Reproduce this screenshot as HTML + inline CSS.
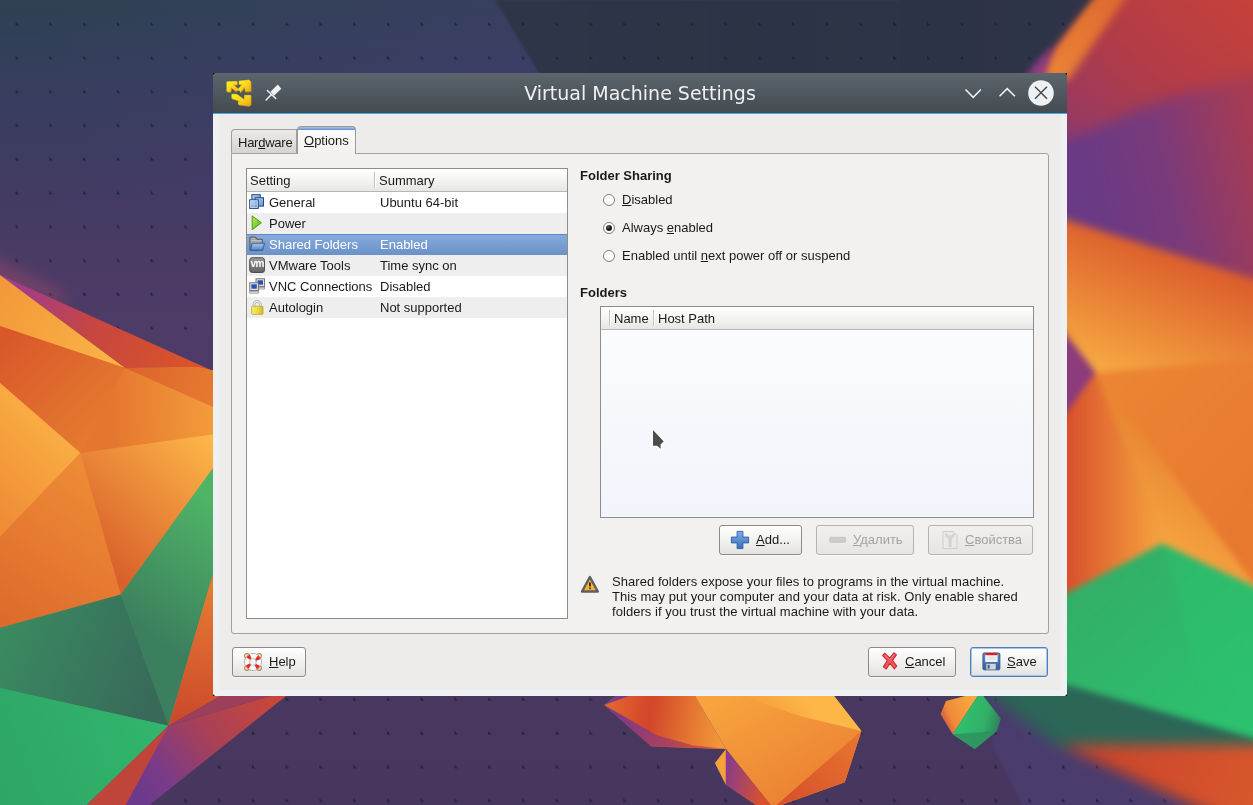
<!DOCTYPE html>
<html><head><meta charset="utf-8"><title>Virtual Machine Settings</title>
<style>
html,body{margin:0;padding:0;}
body{width:1253px;height:805px;overflow:hidden;position:relative;background:#2b3245;font-family:"Liberation Sans",sans-serif;font-size:13px;color:#1a1a1a;}
#wall{position:absolute;left:0;top:0;width:1253px;height:805px;}
#win{opacity:.999;position:absolute;left:213px;top:73px;width:854px;height:623px;background:#eff0f1;}
#tbar{position:absolute;left:0;top:0;width:854px;height:40px;background:linear-gradient(#5b656c,#434b51);border-bottom:1px solid #3daee9;}
#title{position:absolute;left:0;top:0;width:854px;height:40px;line-height:40px;text-align:center;color:#eff0f1;font-family:"DejaVu Sans",sans-serif;font-size:19px;}
.abs{position:absolute;}
u{text-decoration:underline;text-underline-offset:1px;}
.t{position:absolute;white-space:nowrap;line-height:15px;height:15px;}
.b{font-weight:bold;}
/* tabs */
#tab1{position:absolute;left:18px;top:56px;width:66px;height:24px;box-sizing:border-box;border:1px solid #a09e9b;border-bottom:none;border-radius:4px 0 0 0;background:linear-gradient(#eceae8,#d6d4d1);}
#tab2{position:absolute;left:84px;top:53px;width:59px;height:28px;box-sizing:border-box;border:1px solid #9d9b98;border-bottom:none;border-radius:4px 4px 0 0;background:linear-gradient(#fbfbfa,#f2f1f0);overflow:hidden;}
#tab2 i{position:absolute;left:-1px;top:-1px;width:59px;height:4px;box-sizing:border-box;border:1px solid #4b7bb9;border-bottom-color:#6a96cf;border-radius:4px 4px 0 0;background:linear-gradient(#a3c2e8,#7fa6d8);}
#pane{position:absolute;left:18px;top:80px;width:818px;height:481px;box-sizing:border-box;border:1px solid #a3a19e;border-radius:0 3px 3px 3px;background:#f2f1f0;}
/* list */
.list{position:absolute;box-sizing:border-box;border:1px solid #8f8d8a;background:#fff;overflow:hidden;}
.hdr{position:absolute;left:0;top:0;right:0;height:22px;background:linear-gradient(#ffffff,#f4f4f3 50%,#e6e6e5);border-bottom:1px solid #b8b6b3;}
.sep{position:absolute;top:3px;width:1px;height:16px;background:#c4c2bf;border-right:1px solid #fff;}
.row{position:absolute;left:0;width:320px;height:21px;}
.row.alt{background:#eeeeee;}
.row.sel{background:linear-gradient(#86aadb,#6a92c8);color:#fff;border-top:1px solid #5e89c4;box-sizing:border-box;}
.row .n{position:absolute;left:22px;top:3px;line-height:15px;white-space:nowrap;}
.row .s{position:absolute;left:133px;top:3px;line-height:15px;white-space:nowrap;}
.row.sel .n,.row.sel .s{top:2px;}
.row.sel svg{top:1px;}
.row svg{position:absolute;left:2px;top:2px;width:16px;height:16px;}
/* radio */
.radio{position:absolute;width:12.6px;height:12.6px;box-sizing:border-box;border:1px solid #857f7b;border-radius:50%;background:radial-gradient(circle at 50% 40%,#fff 50%,#e9e9e9);}
.radio.on:after{content:"";position:absolute;left:2.1px;top:2.1px;width:6.4px;height:6.4px;border-radius:50%;background:radial-gradient(circle at 35% 30%,#666 0,#1a1a1a 45%);}
/* buttons */
.btn{position:absolute;box-sizing:border-box;height:30px;border:1px solid #8d8b88;border-radius:3px;background:linear-gradient(#ffffff,#f3f3f2 45%,#e3e2e0);box-shadow:0 1px 0 rgba(255,255,255,.6);}
.btn.dis{border-color:#b5b3b0;background:linear-gradient(#f1f0ef,#e6e5e3);color:#a5a3a0;}
.btn.def{border-color:#4f7fbd;box-shadow:inset 0 0 0 1px #a8c4e8;}
.btn .l{position:absolute;top:6px;line-height:15px;white-space:nowrap;}
.btn svg{position:absolute;}
.w{letter-spacing:.05px;}
#body{position:absolute;left:6px;top:41px;width:842px;height:576px;background:#edeceb;}
.cnr{position:absolute;width:0;height:0;border-style:solid;}

</style></head><body>
<svg id="wall" viewBox="0 0 1253 805">
<defs>
<linearGradient id="bg" gradientUnits="userSpaceOnUse" x1="0" y1="0" x2="0" y2="805">
<stop offset="0" stop-color="#2f4152"/><stop offset="0.062" stop-color="#333f59"/><stop offset="0.124" stop-color="#383e5e"/><stop offset="0.186" stop-color="#3d3c61"/><stop offset="0.248" stop-color="#433b63"/><stop offset="0.31" stop-color="#493b65"/><stop offset="0.4" stop-color="#4e3b67"/><stop offset="0.5" stop-color="#4e3a66"/><stop offset="0.75" stop-color="#4b3962"/><stop offset="1" stop-color="#47365d"/>
</linearGradient>
<linearGradient id="dk" gradientUnits="userSpaceOnUse" x1="500" y1="0" x2="1100" y2="0"><stop offset="0" stop-color="#2d3648"/><stop offset="0.4" stop-color="#2b3345"/><stop offset="1" stop-color="#2f3449"/></linearGradient>
<linearGradient id="fac" gradientUnits="userSpaceOnUse" x1="40" y1="0" x2="480" y2="0"><stop offset="0" stop-color="#563c8c" stop-opacity="0"/><stop offset="1" stop-color="#563c8c" stop-opacity=".2"/></linearGradient>
<pattern id="dots" width="33.76" height="33.76" patternUnits="userSpaceOnUse" x="15.6" y="22">
<path d="M0 0L3.4 3.4L0 3.4z" fill="#17202a" fill-opacity=".85"/>
</pattern>
<filter color-interpolation-filters="sRGB" id="bl4" filterUnits="userSpaceOnUse" x="900" y="-60" width="460" height="940"><feGaussianBlur stdDeviation="3"/></filter>
<filter color-interpolation-filters="sRGB" id="bl8" filterUnits="userSpaceOnUse" x="900" y="-60" width="460" height="940"><feGaussianBlur stdDeviation="7"/></filter>
<filter color-interpolation-filters="sRGB" id="bl5" filterUnits="userSpaceOnUse" x="900" y="-60" width="460" height="940"><feGaussianBlur stdDeviation="4.5"/></filter>
<filter color-interpolation-filters="sRGB" id="blg" filterUnits="userSpaceOnUse" x="-40" y="200" width="300" height="220"><feGaussianBlur stdDeviation="7"/></filter>
<filter color-interpolation-filters="sRGB" id="bl2" x="-20%" y="-20%" width="140%" height="140%"><feGaussianBlur stdDeviation="1.5"/></filter>
<!-- left group gradients -->
<linearGradient id="lo1" gradientUnits="userSpaceOnUse" x1="0" y1="300" x2="125" y2="368"><stop offset="0" stop-color="#f29a3a"/><stop offset="1" stop-color="#fbb547"/></linearGradient>
<linearGradient id="lr1" gradientUnits="userSpaceOnUse" x1="20" y1="285" x2="190" y2="368"><stop offset="0" stop-color="#a23c8c"/><stop offset="0.45" stop-color="#c7463f"/><stop offset="1" stop-color="#d9542a"/></linearGradient>
<linearGradient id="ld1" gradientUnits="userSpaceOnUse" x1="0" y1="340" x2="100" y2="440"><stop offset="0" stop-color="#d9572a"/><stop offset="1" stop-color="#e57c30"/></linearGradient>
<linearGradient id="lo2" gradientUnits="userSpaceOnUse" x1="0" y1="520" x2="80" y2="440"><stop offset="0" stop-color="#ef8c36"/><stop offset="1" stop-color="#fbb045"/></linearGradient>
<linearGradient id="lo3b" gradientUnits="userSpaceOnUse" x1="130" y1="368" x2="225" y2="400"><stop offset="0" stop-color="#de642c"/><stop offset="1" stop-color="#e77d30"/></linearGradient>
<linearGradient id="lo3" gradientUnits="userSpaceOnUse" x1="110" y1="430" x2="215" y2="425"><stop offset="0" stop-color="#e4762f"/><stop offset="1" stop-color="#f39c3b"/></linearGradient>
<linearGradient id="lo4" gradientUnits="userSpaceOnUse" x1="100" y1="560" x2="213" y2="440"><stop offset="0" stop-color="#d9602b"/><stop offset="1" stop-color="#fdb748"/></linearGradient>
<linearGradient id="lo5" gradientUnits="userSpaceOnUse" x1="0" y1="620" x2="100" y2="470"><stop offset="0" stop-color="#dd6a2c"/><stop offset="1" stop-color="#ee8c36"/></linearGradient>
<linearGradient id="lg1" gradientUnits="userSpaceOnUse" x1="130" y1="620" x2="213" y2="500"><stop offset="0" stop-color="#3c7f5e"/><stop offset="1" stop-color="#4fb566"/></linearGradient>
<linearGradient id="lg2" gradientUnits="userSpaceOnUse" x1="0" y1="640" x2="150" y2="700"><stop offset="0" stop-color="#3a8a60"/><stop offset="1" stop-color="#386a5a"/></linearGradient>
<linearGradient id="lg3" gradientUnits="userSpaceOnUse" x1="0" y1="780" x2="160" y2="720"><stop offset="0" stop-color="#2ea666"/><stop offset="1" stop-color="#31b56c"/></linearGradient>
<linearGradient id="lr2" gradientUnits="userSpaceOnUse" x1="205" y1="590" x2="190" y2="720"><stop offset="0" stop-color="#e57a32"/><stop offset="1" stop-color="#cc4a2b"/></linearGradient>
<linearGradient id="lp1" gradientUnits="userSpaceOnUse" x1="275" y1="700" x2="140" y2="800"><stop offset="0" stop-color="#c8473a"/><stop offset="0.45" stop-color="#a84058"/><stop offset="0.8" stop-color="#7a3b88"/><stop offset="1" stop-color="#6a3a8c"/></linearGradient>
<!-- right group -->
<linearGradient id="rr1" gradientUnits="userSpaceOnUse" x1="1253" y1="0" x2="1080" y2="190"><stop offset="0" stop-color="#c6423a"/><stop offset="0.5" stop-color="#b03b48"/><stop offset="0.8" stop-color="#9a3a60"/><stop offset="1" stop-color="#7a3a78"/></linearGradient>
<linearGradient id="rst" gradientUnits="userSpaceOnUse" x1="1117" y1="0" x2="1052" y2="80"><stop offset="0" stop-color="#df6a30"/><stop offset="1" stop-color="#ea8436"/></linearGradient>
<linearGradient id="rp1" gradientUnits="userSpaceOnUse" x1="1090" y1="190" x2="1260" y2="150"><stop offset="0" stop-color="#693a85"/><stop offset="0.45" stop-color="#7a3a7a"/><stop offset="1" stop-color="#a83b52"/></linearGradient>
<linearGradient id="ro1" gradientUnits="userSpaceOnUse" x1="1160" y1="250" x2="1110" y2="375"><stop offset="0" stop-color="#dc5f2c"/><stop offset="1" stop-color="#f7a942"/></linearGradient>
<linearGradient id="ro2" gradientUnits="userSpaceOnUse" x1="1100" y1="375" x2="1253" y2="520"><stop offset="0" stop-color="#ec8534"/><stop offset="1" stop-color="#e7792f"/></linearGradient>
<linearGradient id="ro4" gradientUnits="userSpaceOnUse" x1="1200" y1="470" x2="1150" y2="540"><stop offset="0" stop-color="#ea8633"/><stop offset="1" stop-color="#f5a640"/></linearGradient>
<linearGradient id="ro3" gradientUnits="userSpaceOnUse" x1="1067" y1="500" x2="1160" y2="500"><stop offset="0" stop-color="#d9502b"/><stop offset="1" stop-color="#f6a33e"/></linearGradient>
<linearGradient id="rg1" gradientUnits="userSpaceOnUse" x1="1090" y1="560" x2="1230" y2="720"><stop offset="0" stop-color="#33ad66"/><stop offset="1" stop-color="#2cc16f"/></linearGradient>
<linearGradient id="rrd" gradientUnits="userSpaceOnUse" x1="1080" y1="744" x2="1253" y2="790"><stop offset="0" stop-color="#c9432c"/><stop offset="1" stop-color="#d8562c"/></linearGradient>
<!-- bottom polyhedron -->
<linearGradient id="bo1" gradientUnits="userSpaceOnUse" x1="610" y1="715" x2="722" y2="730"><stop offset="0" stop-color="#e2642e"/><stop offset="0.35" stop-color="#d2452a"/><stop offset="0.75" stop-color="#e67a32"/><stop offset="1" stop-color="#f3973a"/></linearGradient>
<linearGradient id="bo2" gradientUnits="userSpaceOnUse" x1="760" y1="720" x2="800" y2="692"><stop offset="0" stop-color="#fdb747" stop-opacity="0"/><stop offset="1" stop-color="#fdb747" stop-opacity="1"/></linearGradient>
<linearGradient id="bo3" gradientUnits="userSpaceOnUse" x1="740" y1="692" x2="800" y2="805"><stop offset="0" stop-color="#f7a33e"/><stop offset="1" stop-color="#eb8032"/></linearGradient>
<linearGradient id="bo4" gradientUnits="userSpaceOnUse" x1="615" y1="715" x2="720" y2="748"><stop offset="0" stop-color="#7a3a8c"/><stop offset="0.5" stop-color="#a8405e"/><stop offset="1" stop-color="#dc5a2c"/></linearGradient>
<linearGradient id="bo5" gradientUnits="userSpaceOnUse" x1="860" y1="735" x2="790" y2="800"><stop offset="0" stop-color="#e8752f"/><stop offset="1" stop-color="#d8522a"/></linearGradient>
<linearGradient id="bo6" gradientUnits="userSpaceOnUse" x1="724" y1="780" x2="765" y2="790"><stop offset="0" stop-color="#8a3c8a"/><stop offset="1" stop-color="#d8522c"/></linearGradient>
<linearGradient id="sp1" gradientUnits="userSpaceOnUse" x1="940" y1="720" x2="975" y2="705"><stop offset="0" stop-color="#c9503e"/><stop offset="0.3" stop-color="#ef8a38"/><stop offset="1" stop-color="#f8a940"/></linearGradient>
<linearGradient id="sp2" gradientUnits="userSpaceOnUse" x1="960" y1="720" x2="1000" y2="730"><stop offset="0" stop-color="#2fc06d"/><stop offset="0.6" stop-color="#31b067"/><stop offset="1" stop-color="#2f7a5c"/></linearGradient>
</defs>
<rect width="1253" height="805" fill="url(#bg)"/>
<polygon points="495,0 1110,0 1030,80 1000,220 580,220 540,75" fill="url(#dk)" filter="url(#bl2)"/>
<polygon points="0,0 495,0 540,75 580,220 0,220" fill="url(#fac)"/>
<!-- bottom-right purple more bluish -->
<polygon points="985,690 1075,750 1215,815 1028,815 994,750" fill="#4a3c6d" filter="url(#bl2)"/>
<rect width="1253" height="805" fill="url(#dots)"/>

<polygon points="-30,245 60,290 70,305 -30,285" fill="#c0506a" opacity=".32" filter="url(#blg)"/>
<!-- LEFT GROUP -->
<g>
<polygon points="0,277 125,368 213,371.5 230,380 230,690 215,697 160,730 120,800 0,800" fill="#e3742f"/>
<polygon points="0,629 120.7,596 229,448 229,516 168.6,724 88,804 0,804" fill="#38905f"/>
<polygon points="0,275 213,371 197,367 125,368" fill="url(#lr1)"/>
<polygon points="0,275 125,368 0,326" fill="url(#lo1)"/>
<polygon points="0,326 125,368 80.5,453 0,383" fill="url(#ld1)"/>
<polygon points="0,383 80.5,453 0,537" fill="url(#lo2)"/>
<polygon points="125,368 197,367 213,370.5 230,378 230,440 80.5,453" fill="url(#lo3)"/>
<polygon points="125,368 197,367 213,370.5 230,378 230,414.5" fill="url(#lo3b)"/>
<polygon points="80.5,453 230,432 230,445 120.7,594.4" fill="url(#lo4)"/>
<polygon points="80.5,453 120.7,594.4 0,627.8 0,537" fill="url(#lo5)"/>
<polygon points="230,445 230,516 168.6,725.7 120.7,594.4" fill="url(#lg1)"/>
<polygon points="120.7,594.4 168.6,725.7 0,688 0,627.8" fill="url(#lg2)"/>
<polygon points="0,688 168.6,725.7 86.8,805 0,805" fill="url(#lg3)"/>
<polygon points="230,516 230,690 220.6,696 168.6,725.7" fill="url(#lr2)"/>
<polygon points="168.6,725.7 220.6,696 225,690 271,690 271,696" fill="#9c3f5a"/>
<polygon points="168.6,725.7 271,696 271,690 292,690 286,696 149.6,805 86.8,805" fill="url(#lp1)"/>
<polygon points="168.6,725.7 125.7,805 86.8,805" fill="#bf453a"/>
</g>

<!-- RIGHT GROUP -->
<g filter="url(#bl8)">
<polygon points="1070,-40 1340,-40 1340,49 1253,76 1159,103 1010,166 980,100" fill="url(#rr1)"/>
<polygon points="1010,164.5 1159,101 1253,74 1340,49 1340,346 1010,242" fill="url(#rp1)"/>
</g>
<g filter="url(#bl5)">
<polygon points="1096,-20 1138,-20 1068,80 1036,80" fill="url(#rst)"/>
<polygon points="1010,202.1 1340,306 1340,400 1095.8,420 1010,330" fill="url(#ro1)"/>
</g>
<polygon points="880,-20 1108,-20 1022,86 880,86" fill="url(#dk)" filter="url(#bl4)"/>
<polygon points="880,0 1092,0 1028,73 880,73" fill="url(#dots)"/>
<polygon points="1034,64 1052,46 1044,84 1020,84" fill="#8a3a8a" opacity=".8" filter="url(#bl4)"/>
<g filter="url(#bl4)">
<polygon points="1020,273.9 1095.8,372.7 1020,476.6" fill="#8c3b7c"/>
<polygon points="1095.8,372.7 1340,350.8 1340,700 1162,610 1162,543.4" fill="url(#ro2)"/>
<polygon points="1095.8,372.7 1162,543.4 1162,610 1020,680 1020,476.6" fill="url(#ro3)"/>
<polygon points="1095.8,372.7 1253,582 1340,640 1162,620 1162,543.4" fill="url(#ro4)"/>
</g>
<g filter="url(#bl8)">
<polygon points="985,690 1040,650 1340,720 1340,756 1060,748" fill="#2c6657"/>
<polygon points="1060,745 1340,745 1340,840 1270,840" fill="url(#rrd)"/>
</g>
<g filter="url(#bl4)">
<polygon points="1162,543.4 1340,626.8 1340,762.6 1020,671.6 1020,617.4" fill="url(#rg1)"/>
<polygon points="1162,543.4 1200,680 1253,700 1253,586" fill="#2cc771" opacity=".35"/>
</g>

<!-- small polyhedron -->
<g>
<polygon points="940.5,714.3 946,701 980.3,692 952.7,734.2" fill="url(#sp1)"/>
<polygon points="980.3,692 1000.8,718.7 997,730.9 974.8,749.1 952.7,734.2" fill="url(#sp2)"/>
<polygon points="952.7,734.2 997,730.9 974.8,749.1" fill="#2f8f60" opacity=".8"/>
</g>

<!-- bottom orange polyhedron -->
<g>
<polygon points="604.2,704.9 620.8,692 692.7,692 725.9,749.1 651.3,746.4" fill="url(#bo1)"/>
<polygon points="604.2,704.9 620.8,692 640,692" fill="#7b3c8c"/>
<polygon points="604.2,704.9 656.8,735.3 692.7,745.3 725.9,749.1 651.3,746.4" fill="url(#bo4)"/>
<polygon points="692.7,692 831,692 861.4,730.9 844.8,782.3 773,808 725.9,749.1" fill="url(#bo3)"/>
<polygon points="730,692 831,692 861.4,730.9 800,716" fill="url(#bo2)"/>
<polygon points="861.4,730.9 844.8,782.3 773,808" fill="url(#bo5)"/>
<polygon points="725.9,749.1 714.9,763 725.9,785.1" fill="#f5a23c"/>
<polygon points="725.9,749.1 725.9,785.1 760,808 773,808" fill="url(#bo6)"/>
</g>
</svg>

<div id="win">
<div id="body"></div>
<div id="tbar"></div><div id="title">Virtual Machine Settings</div>
<svg class="abs" style="left:0;top:0" width="854" height="40" viewBox="0 0 854 40">
<defs><linearGradient id="vmy" x1="0" y1="0" x2="1" y2="1"><stop offset="0" stop-color="#fff01f"/><stop offset=".55" stop-color="#fbd21c"/><stop offset="1" stop-color="#eea51a"/></linearGradient></defs>
<g transform="translate(0.7,0.8)" fill="#c98a10" stroke="#c98a10" stroke-width=".5" stroke-linejoin="round"><polygon points="13.83,8.87 23.73,8.36 24.11,11.17 20.09,11.81 26.16,16.73 23.73,18.96 18.17,14.17 17.22,18.64 13.83,18.33"/><polygon points="26.16,8.11 36.05,6.96 37.52,8.43 37.52,18.01 32.22,18.33 31.58,13.54 27.43,18.96 24.56,16.73 29.48,11.30 26.16,11.17"/><polygon points="18.81,21.20 23.60,21.20 31.27,26.63 31.58,22.16 37.52,22.16 37.52,31.10 35.74,32.69 25.52,31.42 25.20,28.54 28.07,28.22 18.81,25.35"/></g>
<g fill="url(#vmy)" stroke="url(#vmy)" stroke-width=".5" stroke-linejoin="round"><polygon points="13.83,8.87 23.73,8.36 24.11,11.17 20.09,11.81 26.16,16.73 23.73,18.96 18.17,14.17 17.22,18.64 13.83,18.33"/><polygon points="26.16,8.11 36.05,6.96 37.52,8.43 37.52,18.01 32.22,18.33 31.58,13.54 27.43,18.96 24.56,16.73 29.48,11.30 26.16,11.17"/><polygon points="18.81,21.20 23.60,21.20 31.27,26.63 31.58,22.16 37.52,22.16 37.52,31.10 35.74,32.69 25.52,31.42 25.20,28.54 28.07,28.22 18.81,25.35"/></g>
<rect x="23.6" y="17.8" width="3.2" height="3.4" fill="#4b555c"/>
<polygon points="64.79,11.62 68.30,15.77 60.96,22.80 57.45,18.64" fill="#f0f0f1"/>
<path d="M54.38 17.56L62.75 25.54M58.40 21.65L53.10 26.95" stroke="#f0f0f1" stroke-width="1.5" stroke-linecap="round" fill="none"/>
<path d="M752.5 16.5L760.2 24.3L767.9 16.5M786.5 23.3L794.2 15.6L801.9 23.3" stroke="#f0f0f1" stroke-width="1.6" fill="none" stroke-linecap="butt"/>
<circle cx="828" cy="20" r="12.8" fill="#eff0f1"/>
<path d="M822 13.8L834 25.8M834 13.8L822 25.8" stroke="#40484e" stroke-width="1.4" fill="none"/>
</svg>
<div id="pane"></div>
<div id="tab1"><span class="t" style="left:6px;top:5px;letter-spacing:-.25px">Har<u>d</u>ware</span></div>
<div id="tab2"><i></i><span class="t" style="left:6px;top:6px"><u>O</u>ptions</span></div>

<div class="list" style="left:33px;top:95px;width:322px;height:451px">
 <div class="hdr"><span class="t" style="left:3px;top:4px">Setting</span><div class="sep" style="left:127px"></div><span class="t" style="left:132px;top:4px">Summary</span></div>
 <div class="row" style="top:23px"><svg viewBox="0 0 16 16"><defs><linearGradient id="gsq" x1="0" y1="0" x2="1" y2="1"><stop offset="0" stop-color="#c4d8ee"/><stop offset="1" stop-color="#5f8fca"/></linearGradient></defs>
<rect x="2.9" y="0.7" width="8.4" height="8.4" fill="url(#gsq)" stroke="#1f4b8e" stroke-width="1"/>
<rect x="6.1" y="3.7" width="8.4" height="8.4" fill="url(#gsq)" stroke="#1f4b8e" stroke-width="1"/>
<rect x="0.7" y="5.8" width="8.6" height="8.6" fill="url(#gsq)" stroke="#1f4b8e" stroke-width="1"/>
<rect x="1.7" y="6.8" width="6.6" height="6.6" fill="none" stroke="#e4eefa" stroke-width=".8" opacity=".75"/><path d="M5 7.3V13M2.2 10.1H7.8" stroke="#dbe7f5" stroke-width=".8" opacity=".6"/></svg><span class="n">General</span><span class="s">Ubuntu 64-bit</span></div>
 <div class="row alt" style="top:44px"><svg viewBox="0 0 16 16"><defs><linearGradient id="ggr" x1="0" y1="0" x2="1" y2="1"><stop offset="0" stop-color="#b9ea5c"/><stop offset="1" stop-color="#55b414"/></linearGradient></defs>
<polygon points="3.2,0.9 12.3,7.7 3.2,14.8" fill="url(#ggr)" stroke="#4c9c12" stroke-width="1" stroke-linejoin="round"/></svg><span class="n">Power</span></div>
 <div class="row sel" style="top:65px"><svg viewBox="0 0 16 16"><defs><linearGradient id="gfo" x1="0" y1="0" x2="0" y2="1"><stop offset="0" stop-color="#a9c8ee"/><stop offset="1" stop-color="#5587c8"/></linearGradient></defs>
<path d="M0.9 14.2V1.0H6.5L8 3.3H13.4V14.2z" fill="#9a9a98" stroke="#5c5c5a" stroke-width="1" stroke-linejoin="round"/>
<path d="M1.8 4.5H12.6M1.8 6.2H12.6M1.8 2.8H6" stroke="#cfcfcd" stroke-width=".7"/>
<path d="M1.4 14.2L3.2 7.2H15.6L13.6 14.2z" fill="url(#gfo)" stroke="#2d5b9d" stroke-width="1" stroke-linejoin="round"/></svg><span class="n">Shared Folders</span><span class="s">Enabled</span></div>
 <div class="row alt" style="top:86px"><svg viewBox="0 0 16 16"><defs><linearGradient id="gvm" x1="0" y1="0" x2="0" y2="1"><stop offset="0" stop-color="#9c9c9c"/><stop offset="1" stop-color="#626262"/></linearGradient></defs>
<rect x="0.7" y="0.7" width="14.8" height="14.8" rx="2.6" fill="url(#gvm)" stroke="#505050" stroke-width="1"/>
<text x="8.1" y="10.4" text-anchor="middle" font-family="Liberation Sans, sans-serif" font-weight="bold" font-size="10" fill="#fff" letter-spacing="-0.6">vm</text></svg><span class="n">VMware Tools</span><span class="s">Time sync on</span></div>
 <div class="row" style="top:107px"><svg viewBox="0 0 16 16">
<rect x="7" y="0.8" width="8.6" height="7.6" fill="#e4e4e2" stroke="#666" stroke-width=".9"/><rect x="8.6" y="2.3" width="5.4" height="4.4" fill="#2b50b2"/>
<rect x="9.8" y="9.2" width="5.8" height="1.8" fill="#f2f2f2" stroke="#777" stroke-width=".7"/>
<rect x="0.8" y="4.8" width="8.6" height="7.6" fill="#e4e4e2" stroke="#666" stroke-width=".9"/><rect x="2.4" y="6.3" width="5.4" height="4.4" fill="#2b50b2"/>
<rect x="0.8" y="13.2" width="8.6" height="1.9" fill="#f2f2f2" stroke="#777" stroke-width=".7"/></svg><span class="n">VNC Connections</span><span class="s">Disabled</span></div>
 <div class="row alt" style="top:128px"><svg viewBox="0 0 16 16"><defs><linearGradient id="glk" x1="0" y1="0" x2="1" y2="0"><stop offset="0" stop-color="#f7ec78"/><stop offset=".6" stop-color="#e6d640"/><stop offset="1" stop-color="#cbb92a"/></linearGradient></defs>
<path d="M5.0 8V5.6A3.2 3.2 0 0 1 11.4 5.6V8" fill="none" stroke="#a8a8a8" stroke-width="2.6"/>
<path d="M5.0 8V5.6A3.2 3.2 0 0 1 11.4 5.6V8" fill="none" stroke="#eeeeee" stroke-width="1.3"/>
<rect x="2.6" y="7.2" width="11.4" height="8.2" rx="1" fill="url(#glk)" stroke="#b9a82a" stroke-width=".8"/></svg><span class="n">Autologin</span><span class="s">Not supported</span></div>
</div>

<span class="t b" style="left:367px;top:95px">Folder Sharing</span>
<div class="radio" style="left:389.8px;top:120.8px"></div><span class="t" style="left:409px;top:119px"><u>D</u>isabled</span>
<div class="radio on" style="left:389.8px;top:148.8px"></div><span class="t" style="left:409px;top:147px">Always <u>e</u>nabled</span>
<div class="radio" style="left:389.8px;top:176.8px"></div><span class="t" style="left:409px;top:175px">Enabled until <u>n</u>ext power off or suspend</span>
<span class="t b" style="left:367px;top:212px">Folders</span>

<div class="list" style="left:387px;top:233px;width:434px;height:212px;background:linear-gradient(#fbfcfe,#f1f4fa)">
 <div class="hdr"><div class="sep" style="left:8px"></div><span class="t" style="left:13px;top:4px">Name</span><div class="sep" style="left:52px"></div><span class="t" style="left:57px;top:4px">Host Path</span></div>
</div>

<div class="btn" style="left:506px;top:452px;width:83px"><svg style="left:10px;top:4px" width="20" height="20" viewBox="0 0 20 20"><defs><linearGradient id="gpl" x1="0" y1="0" x2="0" y2="1"><stop offset="0" stop-color="#7fb0ea"/><stop offset="1" stop-color="#3a6cb6"/></linearGradient></defs>
<path d="M7.1 1.4H12.9V7.1H18.6V12.9H12.9V18.6H7.1V12.9H1.4V7.1H7.1z" fill="url(#gpl)" stroke="#3465a4" stroke-width="1" stroke-linejoin="round"/></svg><span class="l" style="left:36px"><u>A</u>dd...</span></div>
<div class="btn dis" style="left:603px;top:452px;width:98px"><svg style="left:10px;top:4.4px" width="20" height="20" viewBox="0 0 20 20"><rect x="2.6" y="7.3" width="16" height="5" rx="1.5" fill="#cdcdcb" stroke="#c0bfbd" stroke-width=".8"/></svg><span class="l" style="left:36px"><u>У</u>далить</span></div>
<div class="btn dis" style="left:715px;top:452px;width:105px"><svg style="left:10.5px;top:4px" width="20" height="20" viewBox="0 0 20 20"><path d="M3 1.5H13L17 5.5V18.5H3z" fill="#eceae8" stroke="#cfcdca" stroke-width="1"/>
<path d="M6.3 3.5a3 3 0 0 0 2.6 4.6V16.5h2.2V8.1a3 3 0 0 0 2.6-4.6L11.6 6H8.4z" fill="#d9d7d4" stroke="#c6c4c1" stroke-width=".6"/></svg><span class="l" style="left:36px"><u>С</u>войства</span></div>

<svg class="abs" style="left:366px;top:501px" width="22" height="20" viewBox="0 0 22 20">
<path d="M10.9 3.0L18.8 17.5H3.0z" fill="#f9b233" stroke="#5b6060" stroke-width="2.4" stroke-linejoin="round"/>
<rect x="10.1" y="8.4" width="1.7" height="4" fill="#1b1b1b"/><rect x="10.1" y="13.5" width="1.7" height="1.7" fill="#3a3a2a"/></svg>
<span class="t w" style="left:399px;top:501px">Shared folders expose your files to programs in the virtual machine.</span>
<span class="t w" style="left:399px;top:516px">This may put your computer and your data at risk. Only enable shared</span>
<span class="t w" style="left:399px;top:531px">folders if you trust the virtual machine with your data.</span>

<div class="btn" style="left:19px;top:574px;width:74px"><svg style="left:9px;top:3px" width="22" height="22" viewBox="0 0 22 22">
<g fill="none" stroke="#b88a45" stroke-width="1.1"><circle cx="4.9" cy="4.9" r="2.3"/><circle cx="17.1" cy="4.9" r="2.3"/><circle cx="4.9" cy="17.1" r="2.3"/><circle cx="17.1" cy="17.1" r="2.3"/></g>
<circle cx="11" cy="11" r="5.9" fill="none" stroke="#a2a2a2" stroke-width="6"/>
<circle cx="11" cy="11" r="5.9" fill="none" stroke="#fafafa" stroke-width="4.6"/>
<circle cx="11" cy="11" r="5.9" fill="none" stroke="#f22424" stroke-width="4.4" stroke-dasharray="3 6.268" stroke-dashoffset="-3.134"/>
</svg><span class="l" style="left:36px"><u>H</u>elp</span></div>
<div class="btn" style="left:655px;top:574px;width:88px"><svg style="left:12.4px;top:2.8px" width="17.6" height="19.6" viewBox="0 0 20 20" preserveAspectRatio="none">
<path d="M4.2 2.2L10 7.2L14.6 1.8L17.6 4.0L13 9.6L18 15.4L15.2 18.2L10.2 12.6L6 18.4L2.6 16.2L7.2 9.8L1.8 4.8z" fill="#f0545c" stroke="#cc2430" stroke-width="1.1" stroke-linejoin="round"/>
<path d="M4.4 4.2L10 9L14.6 3.8" fill="none" stroke="#f79aa0" stroke-width=".9" opacity=".8"/></svg><span class="l" style="left:36px"><u>C</u>ancel</span></div>
<div class="btn def" style="left:757px;top:574px;width:78px"><svg style="left:11px;top:4px" width="18.8" height="18.8" viewBox="0 0 20 20"><defs><linearGradient id="gfl" x1="0" y1="0" x2="0" y2="1"><stop offset="0" stop-color="#5f8fd0"/><stop offset="1" stop-color="#315f9f"/></linearGradient></defs>
<rect x="1" y="1" width="18" height="18" rx="1.2" fill="url(#gfl)" stroke="#2c5590" stroke-width="1"/>
<rect x="3.4" y="1" width="13.2" height="9.6" fill="#f4f4f4"/><rect x="3.4" y="1" width="13.2" height="2.4" fill="#e01b24"/>
<path d="M5 5.6H15M5 7.8H15" stroke="#cfcfcf" stroke-width=".8"/>
<rect x="4.6" y="12.6" width="10" height="6" fill="#d5d5d3"/><rect x="6" y="13.6" width="2.2" height="4" fill="#3b5f95"/></svg><span class="l" style="left:36px"><u>S</u>ave</span></div>
<svg class="abs" style="left:436px;top:353px" width="18" height="26" viewBox="0 0 18 26">
<path d="M4 3.9L14.75 15.6L11.6 18.3V22.8L8.1 19.8H4z" fill="#4d4d4d" stroke="#ffffff" stroke-width="2.2" stroke-linejoin="round" paint-order="stroke"/></svg>
<div class="cnr" style="left:0;top:0;border-width:2px 2px 0 0;border-color:#111 transparent transparent transparent"></div>
<div class="cnr" style="right:0;top:0;border-width:0 2px 2px 0;border-color:transparent #111 transparent transparent"></div>
<div class="cnr" style="left:0;bottom:0;border-width:2px 0 0 2px;border-color:transparent transparent transparent #111"></div>
<div class="cnr" style="right:0;bottom:0;border-width:0 0 2px 2px;border-color:transparent transparent #111 transparent"></div>
</div>

</body></html>
